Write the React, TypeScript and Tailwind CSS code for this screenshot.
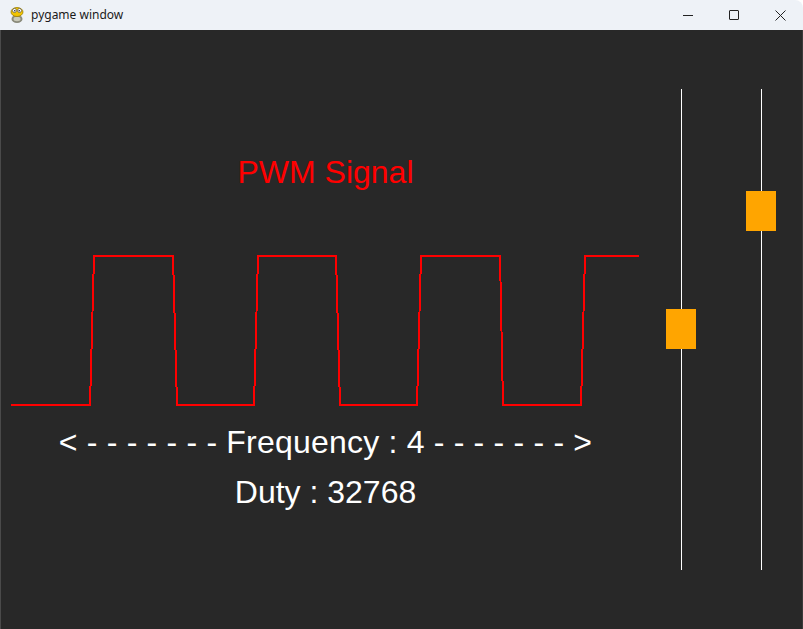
import React from "react";

// points of the square wave, in page coordinates (canvas drawn at y offset 250)
const WAVE = [
  [11, 405], [90, 405], [94, 256], [173, 256], [177, 405],
  [254, 405], [258, 256], [336, 256], [340, 405],
  [417, 405], [421, 256], [500, 256], [503, 405],
  [581, 405], [585, 256], [639, 256],
];

function PygameIcon() {
  return (
    <svg width="16" height="18" viewBox="0 0 16 18">
      <ellipse cx="8" cy="13" rx="5.5" ry="4" fill="#8a8a7a" />
      <ellipse cx="8" cy="13" rx="3.5" ry="2.2" fill="#c9c9b8" />
      <ellipse cx="8" cy="6" rx="6" ry="4.5" fill="#f2c400" stroke="#9c7d00" strokeWidth="0.8" />
      <circle cx="5.5" cy="4.5" r="2" fill="#fff" stroke="#444" strokeWidth="0.6" />
      <circle cx="10.5" cy="4.5" r="2" fill="#fff" stroke="#444" strokeWidth="0.6" />
      <circle cx="5.8" cy="4.8" r="0.8" fill="#222" />
      <circle cx="10.2" cy="4.8" r="0.8" fill="#222" />
    </svg>
  );
}

function TitleBar() {
  return (
    <div className="h-[30px] flex items-center bg-[#eef2f7] rounded-tr-[8px] shrink-0">
      <div className="pl-[9px] pr-[6px] flex items-center">
        <PygameIcon />
      </div>
      <span className="text-[12px] text-[#1a1a1a] font-['Segoe_UI','Noto_Sans',sans-serif]">pygame window</span>
      <div className="ml-auto flex h-full">
        <div className="w-[46px] flex items-center justify-center">
          <div className="w-[10px] h-px bg-[#222]" />
        </div>
        <div className="w-[46px] flex items-center justify-center">
          <div className="w-[10px] h-[10px] border border-[#222] rounded-[1px]" />
        </div>
        <div className="w-[46px] flex items-center justify-center">
          <svg width="11" height="11" viewBox="0 0 11 11">
            <path d="M0.5 0.5 L10.5 10.5 M10.5 0.5 L0.5 10.5" stroke="#222" strokeWidth="1" />
          </svg>
        </div>
      </div>
    </div>
  );
}

function Slider({ thumbTop }: { thumbTop: number }) {
  return (
    <div className="relative w-[30px] h-[481px]">
      <div className="mx-auto w-px h-full bg-white" />
      <div className="absolute left-0 w-[30px] h-[40px] bg-[#ffa500]" style={{ top: thumbTop }} />
    </div>
  );
}

export default function App() {
  const pts = WAVE.map(([x, y]) => `${x},${y}`).join(" ");

  return (
    <div className="w-[803px] h-[629px] flex flex-col bg-white font-['Liberation_Sans',Arial,sans-serif]">
      <TitleBar />
      <div className="flex-1 flex bg-[#282828] border-l border-[#4a4a4a] border-r border-r-[#3a3a3a]">
        {/* signal panel */}
        <div className="w-[665px] flex flex-col">
          <div className="mt-[126px] pr-[16px] text-center text-[32px] leading-[32px] text-[#ff0000]">PWM Signal</div>
          <svg className="mt-[62px]" width="665" height="160" viewBox="1 250 665 160" shapeRendering="crispEdges">
            <polyline points={pts} fill="none" stroke="#ff0000" strokeWidth="2" />
          </svg>
          <div className="mt-[16px] pr-[16px] text-center text-[32px] leading-[32px] tracking-[0.2px] text-white whitespace-pre">
            {"< - - - - - - - Frequency : 4 - - - - - - - >"}
          </div>
          <div className="mt-[18px] pr-[16px] text-center text-[32px] leading-[32px] text-white">Duty : 32768</div>
        </div>
        {/* sliders */}
        <div className="flex gap-[50px] pt-[59px]">
          <Slider thumbTop={220} />
          <Slider thumbTop={102} />
        </div>
      </div>
    </div>
  );
}
